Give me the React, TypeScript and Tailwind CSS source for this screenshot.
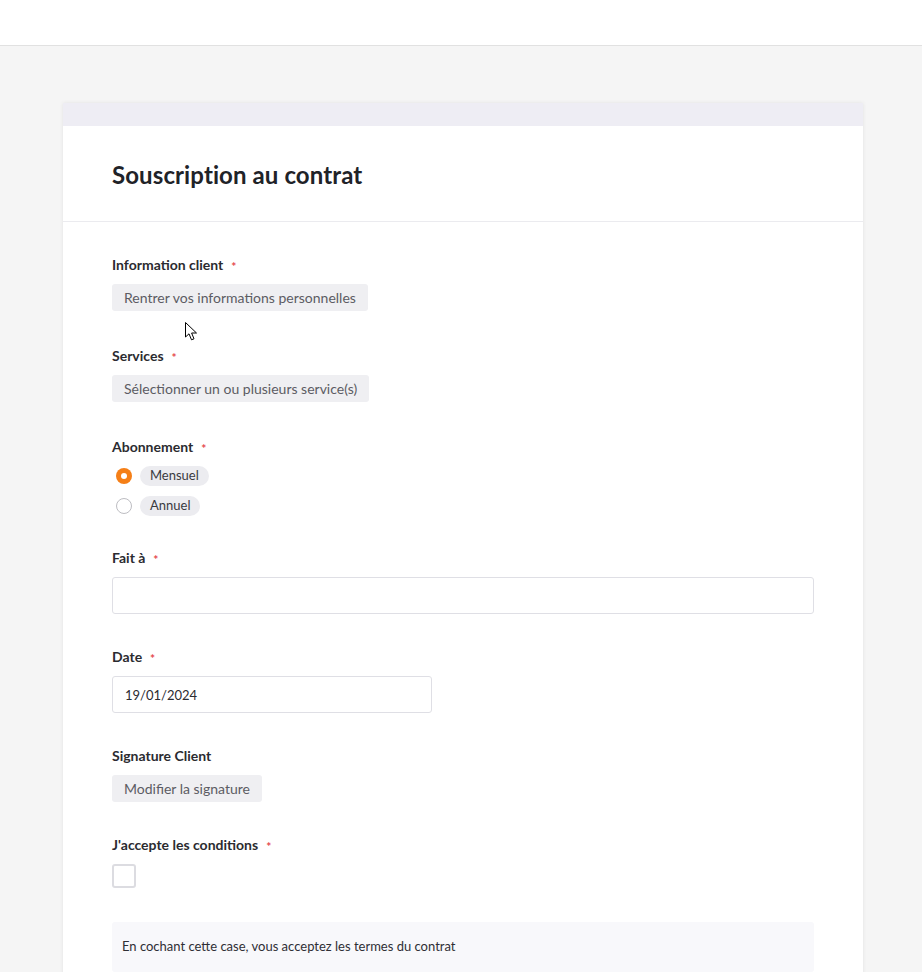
import React from "react";

const font = { fontFamily: "Lato, 'Noto Sans', sans-serif" };

function Label({ text, required }: { text: string; required?: boolean }) {
  return (
    <div className="flex items-center h-[18px] text-[14px] font-bold text-[#2b2b30]">
      <span>{text}</span>
      {required && <span className="ml-[8px] pt-[6px] text-[#e5484d] text-[12px]">*</span>}
    </div>
  );
}

function GrayButton({ children }: { children: React.ReactNode }) {
  return (
    <div className="inline-flex items-center h-[27px] px-3 rounded-[3px] bg-[#efeff2] text-[14px] text-[#5c5c63] self-start">
      {children}
    </div>
  );
}

function Radio({ label, checked }: { label: string; checked?: boolean }) {
  return (
    <div className="flex items-center h-[20px] gap-[8px] pl-[4px]">
      {checked ? (
        <span className="w-4 h-4 rounded-full bg-[#f57f17] flex items-center justify-center">
          <span className="w-[6px] h-[6px] rounded-full bg-white" />
        </span>
      ) : (
        <span className="w-4 h-4 rounded-full border border-[#bdbdc2] bg-white" />
      )}
      <span className="inline-flex items-center h-[20px] px-[10px] rounded-full bg-[#ececf0] text-[13px] text-[#3a3a40]">
        {label}
      </span>
    </div>
  );
}

export default function App() {
  return (
    <div className="min-h-[1200px] bg-[#f5f5f5] relative" style={font}>
      <div className="h-[46px] bg-white border-b border-[#e1e1e1]" />
      <div className="pt-[57px] pl-[4px] flex justify-center">
        <div className="w-[800px] bg-white shadow-[0_0_4px_rgba(0,0,0,0.08)]">
          <div className="h-[23px] bg-[#eeedf4]" />
          <div className="h-[96px] flex items-center px-[49px] pt-[3px] border-b border-[#ebebef]">
            <h1 className="text-[24px] font-bold text-[#1f2328] tracking-[0.1px]">Souscription au contrat</h1>
          </div>
          <div className="px-[49px] pt-[33px] pb-16 flex flex-col">
            <Label text="Information client" required />
            <div className="mt-[11px] flex">
              <GrayButton>Rentrer vos informations personnelles</GrayButton>
            </div>

            <div className="mt-[35px]">
              <Label text="Services" required />
            </div>
            <div className="mt-[11px] flex">
              <GrayButton>Sélectionner un ou plusieurs service(s)</GrayButton>
            </div>

            <div className="mt-[35px]">
              <Label text="Abonnement" required />
            </div>
            <div className="mt-[11px] flex flex-col gap-[10px]">
              <Radio label="Mensuel" checked />
              <Radio label="Annuel" />
            </div>

            <div className="mt-[32px]">
              <Label text="Fait à" required />
            </div>
            <input
              className="mt-[11px] h-[37px] w-full border border-[#dfdfe5] rounded-[3px] px-3 text-[14px] outline-none"
              style={font}
            />

            <div className="mt-[33px]">
              <Label text="Date" required />
            </div>
            <input
              defaultValue="19/01/2024"
              className="mt-[11px] h-[37px] w-[320px] border border-[#dfdfe5] rounded-[3px] px-3 text-[13px] text-[#2b2b30] outline-none"
              style={font}
            />

            <div className="mt-[33px]">
              <Label text="Signature Client" />
            </div>
            <div className="mt-[11px] flex">
              <GrayButton>Modifier la signature</GrayButton>
            </div>

            <div className="mt-[33px]">
              <Label text="J'accepte les conditions" required />
            </div>
            <div className="mt-[11px] w-6 h-6 rounded-[3px] border-2 border-[#dcdce1] bg-white" />

            <div className="mt-[34px] bg-[#f8f8fb] rounded-[3px] px-[10px] py-[15px] text-[13px] text-[#2f2f35]">
              En cochant cette case, vous acceptez les termes du contrat
            </div>
          </div>
        </div>
      </div>

      <svg className="absolute left-[185px] top-[322px]" width="14" height="20" viewBox="0 0 14 20">
        <path
          d="M0.5 0.5 L0.5 15 L4 11.8 L6.5 17.8 L9 16.8 L6.6 11 L11.5 11 Z"
          fill="white"
          stroke="black"
          strokeWidth="1"
          strokeLinejoin="round"
        />
      </svg>
    </div>
  );
}
